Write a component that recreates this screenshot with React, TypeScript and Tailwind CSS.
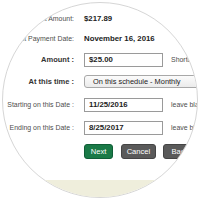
import React from "react";

function Label({ children, bold }: { children: React.ReactNode; bold?: boolean }) {
  return (
    <div
      className={
        "flex w-[71px] shrink-0 justify-end whitespace-nowrap " +
        (bold ? "font-bold text-[#333] text-[7.5px]" : "text-[#4d4d4d] text-[6.95px]")
      }
    >
      {children}
    </div>
  );
}

function TextBox({ value }: { value: string }) {
  return (
    <div className="flex h-full w-[79px] shrink-0 items-center border border-[#9a9a9a] bg-white pl-[4px] text-[7.8px] font-bold text-[#222]">
      {value}
    </div>
  );
}

export default function App() {
  return (
    <div className="h-[200px] w-[200px] bg-white p-[2px] font-['Liberation_Sans',Arial,sans-serif]">
      <div className="flex h-full w-full flex-col overflow-hidden rounded-full border border-[#d6d6d6] bg-white">
        <div className="mt-[-14px] flex h-[20px] shrink-0 items-center">
          <Label>Scheduled Payments:</Label>
          <div className="ml-[10px] text-[7.8px] font-bold text-[#333]">Yes, 1 active</div>
        </div>
        <div className="flex h-[20px] shrink-0 items-center">
          <Label>Last Payment Amount:</Label>
          <div className="ml-[10px] text-[7.8px] font-bold text-[#222]">$217.89</div>
        </div>
        <div className="flex h-[20px] shrink-0 items-center">
          <Label>Last Payment Date:</Label>
          <div className="ml-[10px] text-[7.8px] font-bold text-[#222]">November 16, 2016</div>
        </div>
        <div className="mt-[4px] flex h-[14px] shrink-0 items-center">
          <Label bold>Amount :</Label>
          <div className="ml-[10px] h-full">
            <TextBox value="$25.00" />
          </div>
          <div className="ml-[8px] whitespace-nowrap text-[6.95px] text-[#4d4d4d]">Shortcuts</div>
        </div>
        <div className="mt-[8px] flex h-[13px] shrink-0 items-center">
          <Label bold>At this time :</Label>
          <div className="ml-[10px] flex h-full w-[130px] shrink-0 items-center rounded-[3px] border border-[#a8a8a8] bg-gradient-to-b from-[#fbfbfb] to-[#ebebeb] pl-[8px] text-[7.4px] whitespace-nowrap text-[#1a1a1a]">
            On this schedule - Monthly
          </div>
        </div>
        <div className="mt-[10px] flex h-[14px] shrink-0 items-center">
          <Label>Starting on this Date :</Label>
          <div className="ml-[10px] h-full">
            <TextBox value="11/25/2016" />
          </div>
          <div className="ml-[8px] whitespace-nowrap text-[6.95px] text-[#4d4d4d]">leave blank for today</div>
        </div>
        <div className="mt-[9px] flex h-[14px] shrink-0 items-center">
          <Label>Ending on this Date :</Label>
          <div className="ml-[10px] h-full">
            <TextBox value="8/25/2017" />
          </div>
          <div className="ml-[8px] whitespace-nowrap text-[6.95px] text-[#4d4d4d]">leave blank for never</div>
        </div>
        <div className="mt-[9px] flex h-[15px] shrink-0 items-stretch pl-[81px] text-[7.6px] text-white">
          <div className="flex w-[34px] items-center justify-center rounded-[3px] border border-[#0f5e36] bg-[#1a7a47]">
            Next
          </div>
          <div className="ml-[8px] flex w-[40px] items-center justify-center rounded-[3px] border border-[#444] bg-[#5a5a5a]">
            Cancel
          </div>
          <div className="ml-[7px] flex w-[40px] items-center justify-center rounded-[3px] border border-[#444] bg-[#5a5a5a]">
            Back
          </div>
        </div>
        <div className="mt-[21px] flex-1 bg-[#efeedc]" />
      </div>
    </div>
  );
}
